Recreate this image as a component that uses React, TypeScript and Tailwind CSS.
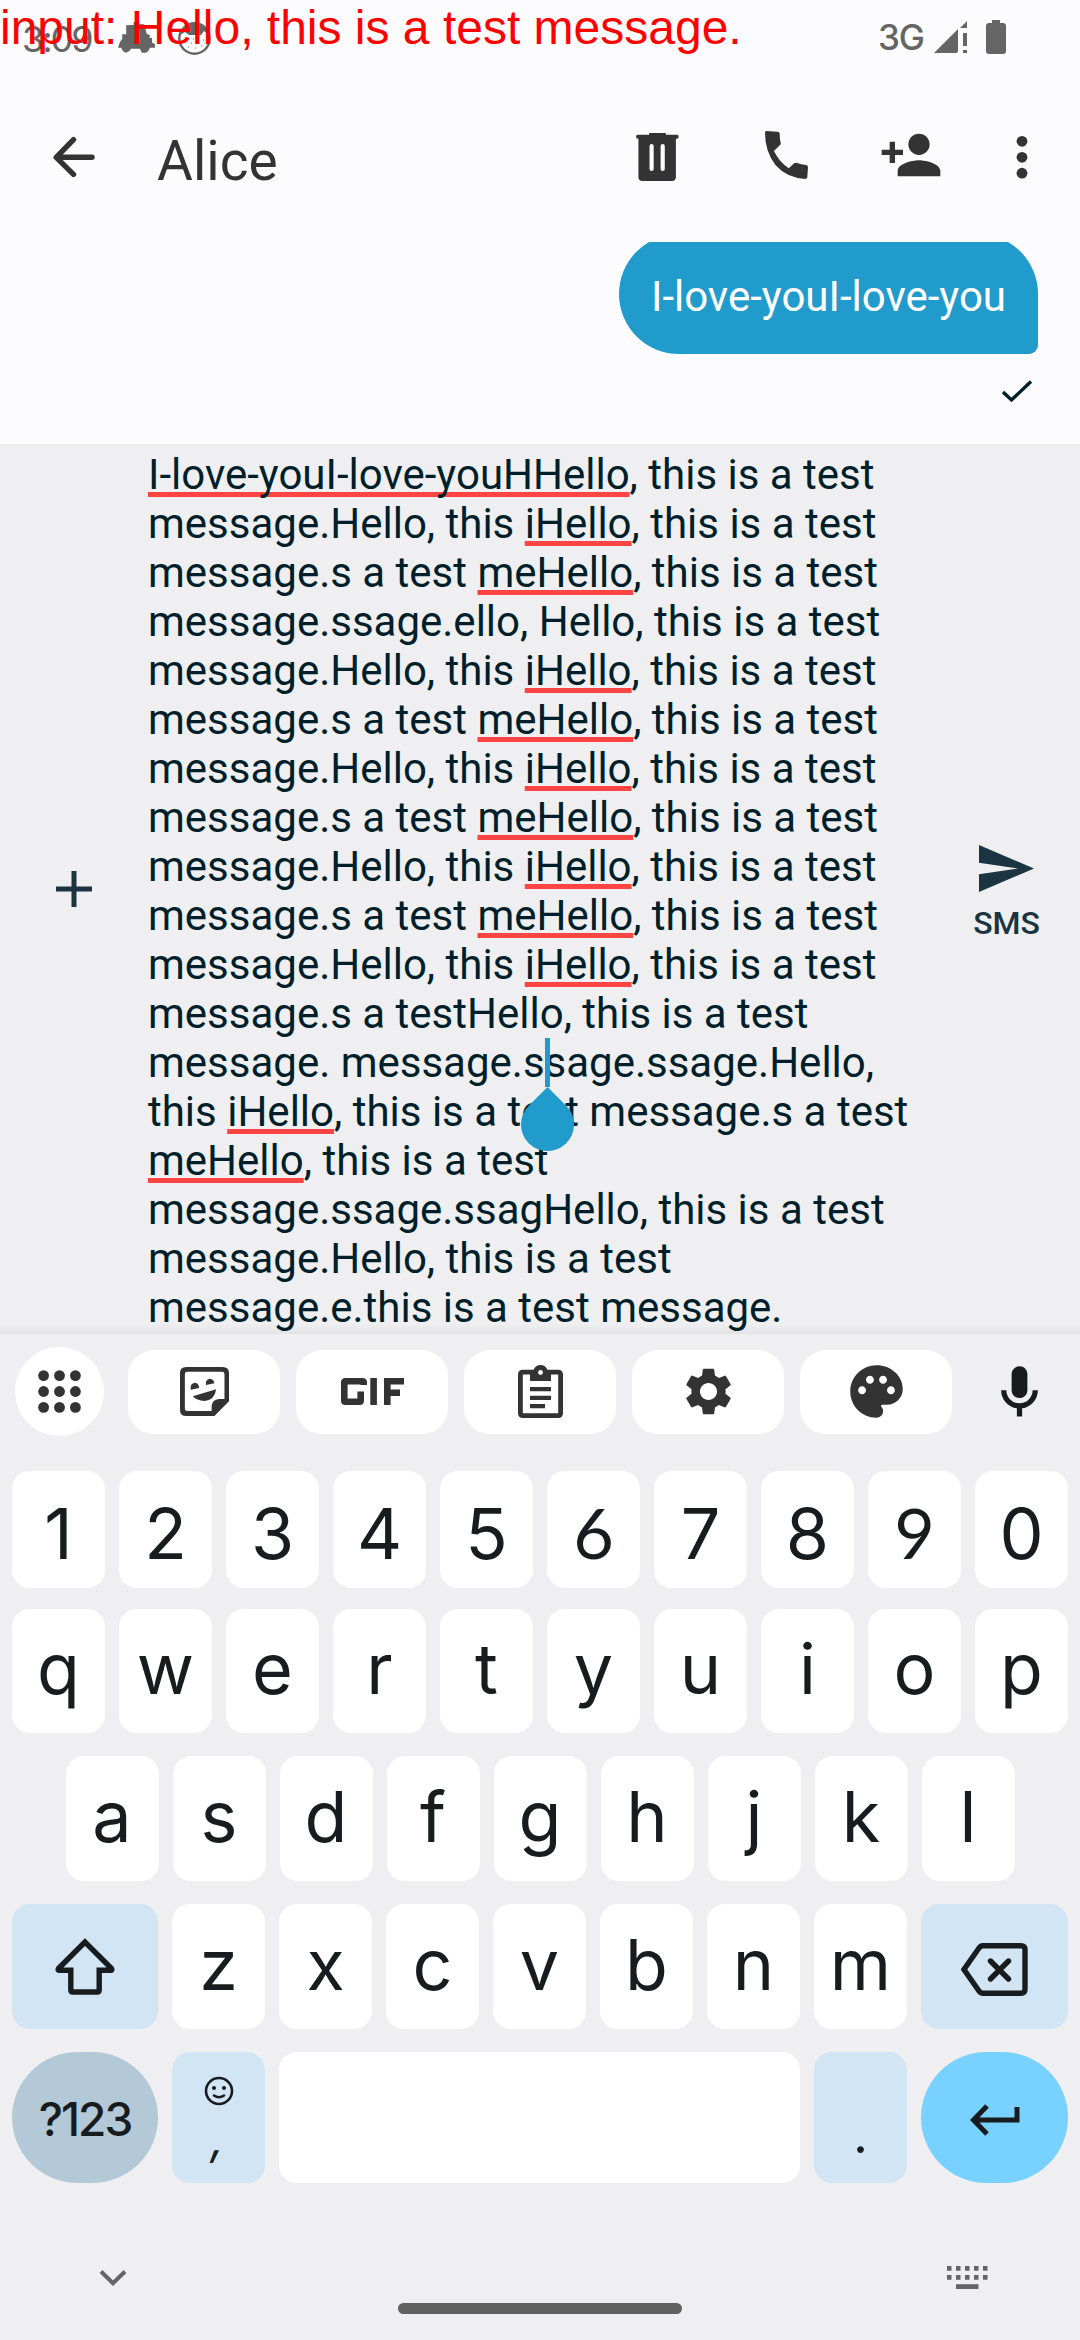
import React from "react";
import { MdSettings, MdPalette, MdPersonAdd } from "react-icons/md";

const LINES: string[] = [
  "[I-love-youI-love-youHHello], this is a test",
  "message.Hello, this [iHello], this is a test",
  "message.s a test [meHello], this is a test",
  "message.ssage.ello, Hello, this is a test",
  "message.Hello, this [iHello], this is a test",
  "message.s a test [meHello], this is a test",
  "message.Hello, this [iHello], this is a test",
  "message.s a test [meHello], this is a test",
  "message.Hello, this [iHello], this is a test",
  "message.s a test [meHello], this is a test",
  "message.Hello, this [iHello], this is a test",
  "message.s a testHello, this is a test",
  "message. message.s|sage.ssage.Hello,",
  "this [iHello], this is a test message.s a test",
  "[meHello], this is a test",
  "message.ssage.ssagHello, this is a test",
  "message.Hello, this is a test",
  "message.e.this is a test message.",
];

function Caret() {
  return (
    <span className="relative">
      <span className="absolute left-0 top-0 z-10 h-[49px] w-[5px] bg-[#219bcc]" />
      <span className="absolute -left-[24px] top-[60px] z-10 h-[53px] w-[53px] rotate-45 rounded-full rounded-tl-none bg-[#219bcc]" />
    </span>
  );
}

function Line({ text }: { text: string }) {
  return (
    <div className="h-[49px] whitespace-pre">
      {text.split(/(\[[^\]]*\]|\|)/).map((part, i) => {
        if (part === "|") return <Caret key={i} />;
        if (part.startsWith("["))
          return (
            <span key={i} className="underline decoration-[#ff4444] decoration-[5px] underline-offset-[3px] [text-decoration-skip-ink:none]">
              {part.slice(1, -1)}
            </span>
          );
        return <React.Fragment key={i}>{part}</React.Fragment>;
      })}
    </div>
  );
}

function Key({ label, className = "" }: { label: string; className?: string }) {
  return (
    <div className={`flex w-[93px] items-center justify-center rounded-[18px] bg-white text-[70px] leading-none ${className}`}>
      {label}
    </div>
  );
}

function Pill({ children }: { children: React.ReactNode }) {
  return <div className="flex h-[84px] w-[152px] items-center justify-center rounded-[26px] bg-white">{children}</div>;
}

function StatusBar() {
  return (
    <div className="flex h-[75px] pl-[22px] pr-[74px] text-[#656565]">
      <div className="w-[96px] pt-[19px] font-[Inter] text-[36px] leading-[40px] tracking-[-2px]">3:09</div>
      <svg className="mt-[22px] h-[31px] w-[37px]" viewBox="0 0 113 93" preserveAspectRatio="none" fill="currentColor">
        <path d="M40 9L48 9L48 0H64L66 7H80L88 36L97 39V48H104V62L113 66V77H98L92 88L85 92H73L67 80H40L34 88L24 92L14 86L10 77H0L6 60L13 50V37H25V10Z" />
      </svg>
      <svg className="ml-[23px] mt-[22px] h-[33px] w-[33px]" viewBox="0 0 33 33">
        <circle cx="16.5" cy="16.5" r="15.2" fill="#fff" stroke="currentColor" strokeWidth="2.4" />
        <path d="M2 13A15 15 0 0 1 31 13L26 9L23 13H11L7 10Z" fill="currentColor" />
        <path d="M8 19h1M13 21h1M20 19h1M25 18h1M10 25h1M17 26h1M23 24h1M15 17h1" stroke="currentColor" />
      </svg>
      <div className="ml-auto mr-[10px] pt-[17px] font-[Inter] text-[35px] font-medium leading-[40px] tracking-[-1px]">3G</div>
      <svg className="mt-[20px] h-[34px] w-[34px]" viewBox="0 0 34 34" fill="currentColor">
        <path d="M0 33L24 9V31Q24 33 22 33ZM26 8L33 1V8ZM29 13h4v13h-4ZM29 30h4v3h-4Z" />
      </svg>
      <svg className="ml-[18px] mt-[20px] h-[34px] w-[20px]" viewBox="0 0 20 34" fill="currentColor">
        <path d="M6 0h8v3h3q3 0 3 3v25q0 3-3 3H3q-3 0-3-3V6q0-3 3-3h3Z" />
      </svg>
    </div>
  );
}

function AppBar() {
  return (
    <div className="flex h-[167px] items-start pl-[53px] pt-[58px] text-[#333333]">
      <svg className="mt-[3px] h-[42px] w-[42px]" viewBox="0 0 42 42" fill="none" stroke="currentColor" strokeWidth="5.4" strokeLinecap="round" strokeLinejoin="round">
        <path d="M39 21.3H3.5M20.5 3.6L3.2 21.3L20.5 38.4" />
      </svg>
      <div className="ml-[62px] mt-[-4px] w-[479px] shrink-0 text-[55px] leading-[64px]">Alice</div>
      <svg className="h-[48px] w-[43px] shrink-0" viewBox="280 399 124 143" preserveAspectRatio="none" fill="currentColor" fillRule="evenodd">
        <path d="M318 399H366V404H399Q403 404 403 410Q403 416 395 416V530Q395 542 383 542H299Q287 542 287 530V416Q280 416 280 410Q280 404 285 404H318ZM319 438V506Q319 512 325 512Q331 512 331 506V438Q331 432 325 432Q319 432 319 438ZM351 438V506Q351 512 357 512Q363 512 363 506V438Q363 432 357 432Q351 432 351 438Z" />
      </svg>
      <svg className="ml-[86px] mt-[-2px] h-[48px] w-[43px] shrink-0" viewBox="653 393 125 144" preserveAspectRatio="none" fill="currentColor">
        <path d="M657 393L690 395Q696 396 696 402Q695 415 699 430Q699 434 696 436L679 453Q694 485 722 505L738 490Q741 487 746 489Q758 494 773 495Q778 496 778 502L776 532Q775 537 770 537Q715 533 684 496Q653 455 653 398Q653 393 657 393Z" />
      </svg>
      <MdPersonAdd className="ml-[71px] mt-[-10px] shrink-0" size={64} />
      <svg className="ml-[73px] mt-[2px] h-[45px] w-[12px] shrink-0" viewBox="0 0 12 45" fill="currentColor">
        <circle cx="6" cy="6.3" r="5.4" />
        <circle cx="6" cy="22.3" r="5.4" />
        <circle cx="6" cy="38.2" r="5.4" />
      </svg>
    </div>
  );
}

function Toolbar() {
  return (
    <div className="flex h-[115px] items-center pl-[15px] text-[#333333]">
      <div className="mr-[24px] flex h-[89px] w-[89px] items-center justify-center rounded-full bg-white">
        <svg className="h-[43px] w-[43px]" viewBox="0 0 43 43" fill="currentColor">
          {[5.6, 21.5, 37.4].map((y) => [5.6, 21.5, 37.4].map((x) => <circle key={`${x}-${y}`} cx={x} cy={y} r="5.4" />))}
        </svg>
      </div>
      <div className="flex gap-[16px]">
        <Pill>
          <svg className="h-[49px] w-[49px]" viewBox="521 141 141 147" preserveAspectRatio="none" fill="currentColor">
            <path fillRule="evenodd" d="M539 141H644Q662 141 662 159V244L620 288H539Q521 288 521 270V159Q521 141 539 141ZM542 155Q535 155 535 162V266Q535 273 542 273H612V258Q614 239 633 237H649V162Q649 155 642 155Z" />
            <path d="M552 209Q549 190 564 188Q576 190 576 204ZM596 195Q593 178 607 176Q619 178 620 190ZM558 229L625 208Q621 241 591 243Q569 242 558 229Z" />
          </svg>
        </Pill>
        <Pill>
          <svg className="h-[27px] w-[63px]" viewBox="0 0 63 27" fill="none" stroke="currentColor" strokeWidth="6.6">
            <path d="M22.7 7V4.5Q22.7 3.3 21.5 3.3H4.5Q3.3 3.3 3.3 4.5V22.5Q3.3 23.7 4.5 23.7H18.5Q19.7 23.7 19.7 22.5V13.5M32.6 0V27M46.3 27V3.3H63M46.3 14.8H59" />
          </svg>
        </Pill>
        <Pill>
          <svg className="h-[53px] w-[45px]" viewBox="0 0 45 53">
            <path d="M5 7.2H40Q42.6 7.2 42.6 9.8V48Q42.6 50.6 40 50.6H5Q2.4 50.6 2.4 48V9.8Q2.4 7.2 5 7.2Z" fill="none" stroke="currentColor" strokeWidth="4.8" />
            <path d="M12 16V5H15.5Q17.5 0 22.5 0Q27.5 0 29.5 5H33V16Z" fill="currentColor" />
            <circle cx="22.5" cy="7.5" r="2.4" fill="#fff" />
            <path d="M12 24.2H33M12 32.8H33M12 41.1H27" stroke="currentColor" strokeWidth="4.3" />
          </svg>
        </Pill>
        <Pill>
          <MdSettings size={57} />
        </Pill>
        <Pill>
          <MdPalette size={63} />
        </Pill>
      </div>
      <svg className="ml-[36px] h-[63px] w-[63px] text-[#191c1e]" viewBox="0 0 24 24" fill="currentColor">
        <path d="M12 14.5c1.66 0 3-1.34 3-3V5.4c0-1.66-1.34-3-3-3S9 3.74 9 5.4v6.1c0 1.66 1.34 3 3 3z" />
        <path d="M17 11.5c0 2.76-2.24 5-5 5s-5-2.24-5-5H5c0 3.53 2.61 6.43 6 6.92v3.1h2v-3.1c3.39-.49 6-3.39 6-6.92h-2z" />
      </svg>
    </div>
  );
}

function Keyboard() {
  return (
    <div className="h-[1006px] bg-[#efeff1] font-[Inter] text-[#191c1e]">
      <Toolbar />
      <div className="flex flex-col px-[12px] pt-[22px]">
        <div className="flex h-[117px] gap-[14px]">
          {"1234567890".split("").map((k) => (
            <Key key={k} label={k} className={k === "6" || k === "9" ? "pt-[4px] font-[Lato]" : "pt-[8px]"} />
          ))}
        </div>
        <div className="mt-[21px] flex h-[124px] gap-[14px]">
          {"qwertyuiop".split("").map((k) => (
            <Key key={k} label={k} className="pb-[4px]" />
          ))}
        </div>
        <div className="mt-[23px] flex h-[125px] justify-center gap-[14px]">
          {"asdfghjkl".split("").map((k) => (
            <Key key={k} label={k} className="pb-[4px]" />
          ))}
        </div>
        <div className="mt-[23px] flex h-[125px] gap-[14px]">
          <div className="flex w-[146px] items-center justify-center rounded-[18px] bg-[#d2e5f5]">
            <svg className="h-[57px] w-[60px]" viewBox="0 0 60 57" fill="none" stroke="currentColor" strokeWidth="5.4">
              <path d="M30 4L3.5 30.5Q2.5 32.3 4.5 32.3H15.8V52Q15.8 54 17.8 54H42.2Q44.2 54 44.2 52V32.3H55.5Q57.5 32.3 56.5 30.5Z" />
            </svg>
          </div>
          {"zxcvbnm".split("").map((k) => (
            <Key key={k} label={k} className="pb-[4px]" />
          ))}
          <div className="flex w-[147px] items-center justify-center rounded-[18px] bg-[#d2e5f5]">
            <svg className="mt-[5px] h-[53px] w-[67px]" viewBox="0 0 67 53" fill="none" stroke="currentColor" strokeWidth="5.4" strokeLinecap="round">
              <path d="M22 2.8H60Q64 2.8 64 6.8V46.2Q64 50.2 60 50.2H22Q19.5 50.2 18 48L3 26.5L18 5Q19.5 2.8 22 2.8ZM29.5 18L47.5 36M47.5 18L29.5 36" />
            </svg>
          </div>
        </div>
        <div className="mt-[23px] flex h-[131px] gap-[14px]">
          <div className="flex w-[146px] items-center justify-center rounded-full bg-[#b4c9d7] pt-[3px] text-[46px] font-medium leading-none tracking-[-2px]">?123</div>
          <div className="flex w-[93px] flex-col items-center rounded-[18px] bg-[#d2e5f5] pt-[24px]">
            <svg className="h-[30px] w-[30px]" viewBox="0 0 30 30" fill="none" stroke="currentColor" strokeWidth="2.6" strokeLinecap="round">
              <circle cx="15" cy="15" r="13" />
              <circle cx="10" cy="12" r="2" fill="currentColor" stroke="none" />
              <circle cx="20" cy="12" r="2" fill="currentColor" stroke="none" />
              <path d="M10 19.5Q15 23 20 19.5" />
            </svg>
            <span className="mt-[9px] -skew-x-12 text-[46px] leading-[46px]">,</span>
          </div>
          <div className="w-[521px] rounded-[18px] bg-white" />
          <div className="flex w-[93px] justify-center rounded-[18px] bg-[#d2e5f5] pt-[57px] text-[52px] leading-[52px]">.</div>
          <div className="flex w-[147px] items-center justify-center rounded-full bg-[#78d1ff]">
            <svg className="mt-[5px] h-[32px] w-[50px]" viewBox="0 0 50 32" fill="none" stroke="currentColor" strokeWidth="5">
              <path d="M47 3V16H4M17 2L3.5 16L17 30" />
            </svg>
          </div>
        </div>
      </div>
      <div className="flex justify-between pl-[99px] pr-[92px] pt-[83px] text-[#656565]">
        <svg className="mt-[3px] h-[18px] w-[28px]" viewBox="0 0 28 18" fill="none" stroke="currentColor" strokeWidth="4">
          <path d="M2 2.5L14 14.3L26 2.5" />
        </svg>
        <svg className="h-[23px] w-[41px]" viewBox="0 0 41 23" fill="currentColor">
          {[0, 9, 18, 27, 36].map((x) => (
            <path key={x} d={`M${x} 0h4.5v4.8h-4.5ZM${x} 9h4.5v4.8h-4.5Z`} />
          ))}
          <path d="M9 18.2h22.5v4.8H9Z" />
        </svg>
      </div>
      <div className="mx-auto mt-[14px] h-[11px] w-[284px] rounded-full bg-[#606060]" />
    </div>
  );
}

export default function App() {
  return (
    <div className="relative flex h-[2340px] w-[1080px] flex-col overflow-hidden bg-[#fcfcff] font-[Roboto,sans-serif]">
      <div className="absolute left-0 top-0 z-20 whitespace-pre font-['Liberation_Sans',sans-serif] text-[48px] leading-[55px] text-[#ff0000]">input: Hello, this is a test message.</div>
      <StatusBar />
      <AppBar />
      <div className="flex h-[202px] flex-col items-end overflow-hidden pr-[42px]">
        <div className="-mt-[8px] flex h-[120px] w-[419px] shrink-0 items-center justify-center rounded-[60px] rounded-br-[9px] bg-[#219bcc] pb-[2px] pt-[6px] text-[42px] leading-[49px] text-white">I-love-youI-love-you</div>
        <svg className="mr-[5px] mt-[25px] h-[24px] w-[32px]" viewBox="0 0 32 24" fill="none" stroke="#001f2a" strokeWidth="3.4">
          <path d="M2 13L10.5 21L30 2.5" />
        </svg>
      </div>
      <div className="flex h-[890px] bg-[#efeff1]">
        <div className="flex w-[148px] items-center justify-center">
          <svg className="h-[36px] w-[36px]" viewBox="0 0 36 36" stroke="#1a3442" strokeWidth="5">
            <path d="M18 0V36M0 18H36" />
          </svg>
        </div>
        <div className="w-[810px] pt-[6px] text-[42px] leading-[49px] text-[#001f2a]">
          {LINES.map((l, i) => (
            <Line key={i} text={l} />
          ))}
        </div>
        <div className="flex flex-1 flex-col items-center pr-[25px] pt-[401px] text-[#1a3442]">
          <svg className="h-[47px] w-[55px] shrink-0" viewBox="0 0 55 47" fill="currentColor">
            <path d="M0 0L55 23.5L0 47V29.3L39 23.5L0 17.7Z" />
          </svg>
          <div className="mt-[12px] text-[32px] font-medium leading-[38px]">SMS</div>
        </div>
      </div>
      <div className="-mt-[10px] h-[10px] bg-gradient-to-b from-transparent to-black/5" />
      <Keyboard />
    </div>
  );
}
